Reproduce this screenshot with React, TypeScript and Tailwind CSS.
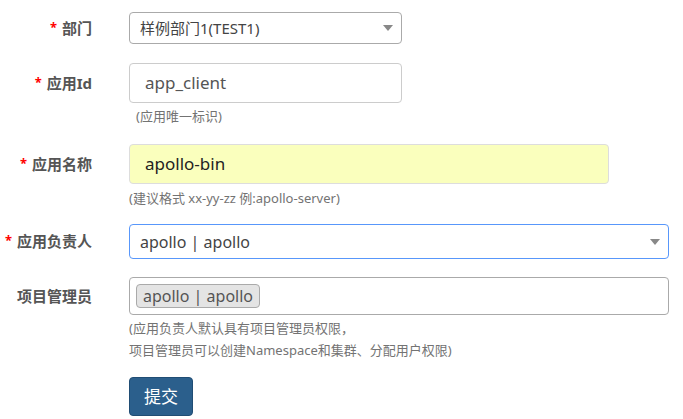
import React from 'react';

const font = { fontFamily: '"Noto Sans", "Noto Sans CJK SC", sans-serif' };

function Label({ text, required }: { text: string; required?: boolean }) {
  return (
    <div className="w-[92px] shrink-0 text-right text-[15px] font-bold text-[#555] whitespace-nowrap leading-none">
      {required && <span className="text-[#f00] text-[13px] align-top mr-[5px]">*</span>}
      {text}
    </div>
  );
}

function Caret() {
  return (
    <span className="absolute right-[8px] top-1/2 -translate-y-1/2 w-0 h-0 border-l-[5px] border-r-[5px] border-t-[6px] border-l-transparent border-r-transparent border-t-[#888]" />
  );
}

function Hint({ children, className = '' }: { children: React.ReactNode; className?: string }) {
  return <div className={`text-[13px] text-[#737373] whitespace-nowrap ${className}`}>{children}</div>;
}

export default function App() {
  return (
    <div className="w-[683px] h-[419px] bg-white overflow-hidden pt-[12px]" style={font}>
      {/* 部门 */}
      <div className="flex items-center gap-[37px]">
        <Label text="部门" required />
        <div className="relative w-[273px] h-[32px] border border-[#aaa] rounded-[4px] flex items-center pl-[10px] text-[15px] text-[#444]">
          样例部门1(TEST1)
          <Caret />
        </div>
      </div>

      {/* 应用Id */}
      <div className="flex items-center gap-[37px] mt-[19px]">
        <Label text="应用Id" required />
        <div className="w-[273px] h-[40px] border border-[#ccc] rounded-[4px] flex items-center pl-[15px] text-[17px] text-[#555]">
          app_client
        </div>
      </div>
      <Hint className="ml-[136px] mt-[3px] leading-[20px]">(应用唯一标识)</Hint>

      {/* 应用名称 */}
      <div className="flex items-center gap-[37px] mt-[18px]">
        <Label text="应用名称" required />
        <div className="w-[480px] h-[40px] border border-[#ddd] bg-[#faffbd] rounded-[4px] flex items-center pl-[15px] text-[17px] text-[#222]">
          apollo-bin
        </div>
      </div>
      <Hint className="ml-[129px] mt-[4px] leading-[20px]">(建议格式 xx-yy-zz 例:apollo-server)</Hint>

      {/* 应用负责人 */}
      <div className="flex items-center gap-[37px] mt-[16px]">
        <Label text="应用负责人" required />
        <div className="relative w-[540px] h-[35px] border border-[#5897fb] rounded-[4px] flex items-center pl-[10px] text-[16px] text-[#444]">
          apollo | apollo
          <Caret />
        </div>
      </div>

      {/* 项目管理员 */}
      <div className="flex items-center gap-[37px] mt-[18px]">
        <Label text="项目管理员" />
        <div className="w-[540px] h-[38px] border border-[#aaa] rounded-[4px] flex items-center pl-[6px]">
          <span className="h-[24px] px-[6px] flex items-center bg-[#e4e4e4] border border-[#aaa] rounded-[4px] text-[16px] text-[#555]">
            apollo | apollo
          </span>
        </div>
      </div>
      <div className="ml-[129px] mt-[2px]">
        <Hint className="leading-[22px]">(应用负责人默认具有项目管理员权限，</Hint>
        <Hint className="leading-[22px]">项目管理员可以创建Namespace和集群、分配用户权限)</Hint>
      </div>

      {/* 提交 */}
      <div className="ml-[129px] mt-[16px]">
        <button className="w-[64px] h-[39px] bg-[#2b5f8c] border border-[#204d74] rounded-[4px] text-white text-[17px]">
          提交
        </button>
      </div>
    </div>
  );
}
